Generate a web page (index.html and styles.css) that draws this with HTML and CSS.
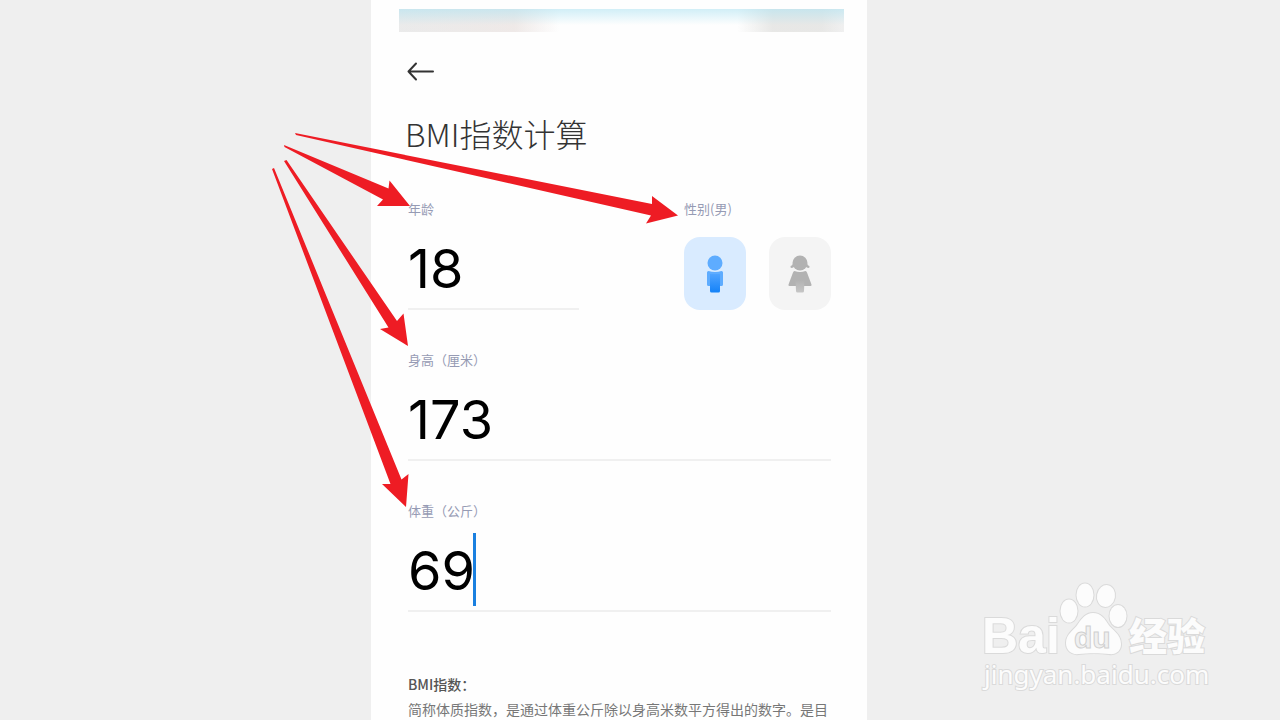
FILE: index.html
```
<!DOCTYPE html>
<html lang="zh-CN">
<head>
  <meta charset="UTF-8">
  <title>BMI指数计算</title>
  <meta name="viewport" content="width=device-width, initial-scale=1">
  <link rel="stylesheet" href="styles.css">
</head>
<body>
  <div class="page">
    <main class="phone">
      <div class="statusbar"></div>

      <button class="back" type="button" aria-label="返回">
        <svg width="28" height="20" viewBox="0 0 28 20" fill="none" stroke="#333" stroke-width="2" stroke-linecap="round" stroke-linejoin="round">
          <path d="M26 9.500H1.500M9 1.500L1.500 9.500L9 17.500"/>
        </svg>
      </button>

      <h1>BMI指数计算</h1>

      <form class="form">
        <div class="row">
          <div class="field field-age">
            <label for="age">年龄</label>
            <div class="entry"><input id="age" type="text" inputmode="numeric" value="18"></div>
          </div>
          <div class="gender" role="group" aria-labelledby="gender-label">
            <span class="label" id="gender-label">性别(男)</span>
            <div class="choices">
              <button class="choice selected" type="button" aria-label="男" aria-pressed="true">
                <svg width="24" height="38" viewBox="0 0 24 38">
                  <defs>
                    <linearGradient id="blue" x1="0" y1="0" x2="0" y2="1">
                      <stop offset="0" stop-color="#4fa3ff"/>
                      <stop offset="1" stop-color="#1482f8"/>
                    </linearGradient>
                  </defs>
                  <circle cx="12" cy="8" r="7.500" fill="#5eacff"/>
                  <path d="M5.500 16q6.500 2 13 0q1.500 0 1.500 1.500v12q0 1.500-1.500 1.500h-13q-1.500 0-1.500-1.500v-12q0-1.500 1.500-1.500z" fill="#5eacff"/>
                  <path d="M7 19h10v17q0 1.500-1.500 1.500h-7q-1.500 0-1.500-1.500z" fill="url(#blue)"/>
                </svg>
              </button>
              <button class="choice" type="button" aria-label="女" aria-pressed="false">
                <svg width="24" height="38" viewBox="0 0 24 38">
                  <defs>
                    <linearGradient id="gray" x1="0" y1="0" x2="0" y2="1">
                      <stop offset="0" stop-color="#b2b2b2"/>
                      <stop offset="1" stop-color="#c6c6c6"/>
                    </linearGradient>
                  </defs>
                  <path d="M5 8.500Q4.500 10.500 2.600 11Q2 12.800 3.600 13Q5.500 13 6.500 11zM19 8.500Q19.500 10.500 21.400 11Q22 12.800 20.400 13Q18.500 13 17.500 11z" fill="#b2b2b2"/>
                  <circle cx="12" cy="8" r="7.500" fill="#b2b2b2"/>
                  <path d="M6.500 16q5.500 2 11 0q1 0 1.500 1.500l4.500 12q.3 1.500-1 1.500h-21q-1.300 0-1-1.500l4.500-12q.5-1.500 1.500-1.500z" fill="#b2b2b2"/>
                  <path d="M7.500 25h9l-.5 11q0 1.500-1.500 1.500h-5q-1.500 0-1.500-1.500z" fill="url(#gray)"/>
                </svg>
              </button>
            </div>
          </div>
        </div>

        <div class="field">
          <label for="height">身高（厘米）</label>
          <div class="entry"><input id="height" type="text" inputmode="numeric" value="173"></div>
        </div>

        <div class="field">
          <label for="weight">体重（公斤）</label>
          <div class="entry">
            <input id="weight" class="active" type="text" inputmode="numeric" value="69">
            <span class="caret"></span>
          </div>
        </div>
      </form>

      <section class="info">
        <h2>BMI指数：</h2>
        <p>简称体质指数，是通过体重公斤除以身高米数平方得出的数字。是目</p>
      </section>
    </main>

    <div class="watermark">
      <svg width="250" height="130" viewBox="0 0 250 130" role="img" aria-label="Baidu 经验">
        <g class="mark">
          <text class="bai" x="12" y="83">Bai</text>
          <ellipse cx="99" cy="41" rx="8.500" ry="11.500"/>
          <ellipse cx="115" cy="25" rx="8.500" ry="11.500"/>
          <ellipse cx="136" cy="26" rx="9" ry="11" transform="rotate(10 136 26)"/>
          <ellipse cx="148" cy="46" rx="8.500" ry="11"/>
          <path d="M123 43C131 43 135 49 138 54C142 60 151 64 151 74C151 81 146 85 139 84C131 83 117 83 109 84C101 85 96 80 96 73C96 64 104 60 108 54C112 48 116 43 123 43z"/>
          <text class="jingyan" x="159" y="80">经验</text>
          <text class="url" x="14" y="114">jingyan.baidu.com</text>
        </g>
        <text class="du" x="104" y="78">du</text>
      </svg>
    </div>

    <svg class="arrows" viewBox="0 0 1280 720" preserveAspectRatio="xMinYMin meet" aria-hidden="true">
      <path d="M295 133L652 204L652 196L678 215.500L646 223.500L651 215.500L296 135z"/>
      <path d="M284 145L388.500 188.500L389.500 180.500L410 206L377 206L383 199.500L284.500 147z"/>
      <path d="M284 161L286.500 160L397 321L403.500 313.500L408 346L380 329L388.500 327.500z"/>
      <path d="M272 169L274 168L401.500 479.500L408.500 474L406 507L382 484L390.500 484z"/>
    </svg>
  </div>
</body>
</html>
```

FILE: styles.css
```
* {
  box-sizing: border-box;
}
body {
  margin: 0;
  background: #efefef;
  font-family: "Noto Sans CJK SC", sans-serif;
}
h1, h2, p {
  margin: 0;
}
button {
  padding: 0;
  border: none;
  background: none;
}
svg {
  display: block;
}
.page {
  position: relative;
  display: grid;
  grid-template-columns: 371fr 496fr 413fr;
  min-height: 100vh;
}
.phone {
  grid-column: 2;
  padding: 9px 36px 0 37px;
  background: #fefefe;
}
.statusbar {
  height: 23px;
  margin: 0 -13px 0 -9px;
  background:
    linear-gradient(to bottom, rgba(190, 232, 244, 0.7), rgba(254, 254, 254, 0.3) 70%),
    linear-gradient(to right, #e2e2e2, #e8e0de 26%, #fefefe 36%, #fefefe 76%, #dededc 84%, #dededc 95%, #eaeaea);
}
.back {
  display: block;
  margin: 30px 0 0 -1px;
}
h1 {
  margin: 31px 0 0 -3px;
  font-size: 32px;
  font-weight: 300;
  line-height: 40px;
  color: #333;
}
.form {
  display: flex;
  flex-direction: column;
  gap: 41px;
  margin-top: 47px;
}
.row {
  display: flex;
  justify-content: space-between;
}
.field-age {
  width: 171px;
}
label, .label {
  display: block;
  font-size: 13px;
  line-height: 18px;
  color: #969bb4;
}
.entry {
  display: flex;
  padding: 13px 0 4px;
  border-bottom: 2px solid #f0f0f0;
}
input {
  width: 100%;
  height: 73px;
  padding: 2px 0 0;
  border: none;
  outline: none;
  background: none;
  font-family: Inter, sans-serif;
  font-size: 54px;
  color: #000;
}
.active {
  width: 65px;
}
.caret {
  width: 3px;
  background: #1a80e0;
}
.choices {
  display: flex;
  gap: 23px;
  margin-top: 19px;
}
.choice {
  display: flex;
  align-items: center;
  justify-content: center;
  width: 62px;
  height: 73px;
  border-radius: 16px;
  background: #f4f4f4;
}
.selected {
  background: #d9ebff;
}
.info {
  margin-top: 62px;
  color: #777;
}
h2 {
  font-size: 14px;
  font-weight: 500;
  line-height: 20px;
  color: #555;
}
.info p {
  margin-top: 6px;
  font-size: 14px;
  line-height: 18px;
  white-space: nowrap;
}
.watermark {
  grid-column: 3;
  display: flex;
  align-items: flex-end;
  justify-content: flex-end;
  padding: 0 60px 20px 0;
}
.mark {
  fill: #fcfcfc;
  stroke: #dadada;
  stroke-width: 2px;
  paint-order: stroke;
}
.bai {
  font: bold 50px "Liberation Sans", sans-serif;
}
.jingyan {
  font: 900 38px "Noto Sans CJK SC", sans-serif;
}
.url {
  font: 26px "Noto Sans", sans-serif;
}
.du {
  font: bold 30px "Liberation Sans", sans-serif;
  fill: #f0f0f0;
  stroke: #d0d0d0;
}
.arrows {
  position: absolute;
  top: 0;
  left: 0;
  width: 100%;
  fill: #ee1c24;
  pointer-events: none;
}
```
